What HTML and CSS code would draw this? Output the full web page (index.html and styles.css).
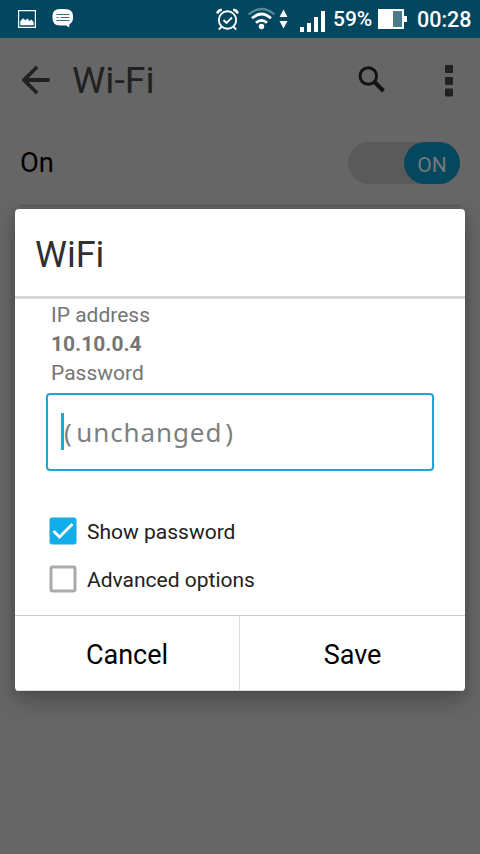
FILE: index.html
```html
<!DOCTYPE html>
<html lang="en">
<head>
<meta charset="utf-8">
<title>Wi-Fi</title>
<link rel="stylesheet" href="styles.css">
</head>
<body>
<header class="status">
  <svg class="status-left" width="60" height="38" viewBox="0 0 60 38">
    <path d="M.6 10.6h16.8v16.8H.6z" fill="none" stroke="#fff" stroke-width="1.2"/>
    <path d="M2.3 25.3v-4l2.700-3 2.500 2 1.900-1.700 2.300 2.500 2-1.500 2 3v2.700z" fill="#fff"/>
    <path d="M42 9h5q8 0 8 7v2q0 4-3.500 6.300l-.3 3.200-3-2H42q-7.500 0-7.500-7.500V16q0-7 7.500-7z" fill="#fff"/>
    <path d="M38.500 14.500h13M38.500 17.500h2M42.500 17.500h9M38.500 20.500h13" stroke="#04475f" stroke-width=".8"/>
  </svg>
  <svg class="status-right" width="112" height="38" viewBox="216 0 112 38">
    <g fill="none" stroke="#fff" stroke-width="1.900">
      <circle cx="227.500" cy="20" r="8.700"/>
      <path d="M223.500 20l3 3 5.500-5.500M221.800 26.500l-3 3M233.200 26.500l3 3"/>
      <path d="M217.300 13.500q1-3.500 4.500-3.800M237.700 13.500q-1-3.500-4.500-3.800" stroke-width="2.600"/>
      <path d="M248.500 14.500q13-11 26 0" stroke="#568797" stroke-width="2.200"/>
      <path d="M252 18.300q9.500-8.500 19 0" stroke-width="2.800"/>
      <path d="M256 22.800q5.500-5 11 0" stroke-width="2.700"/>
    </g>
    <circle cx="261.500" cy="26.500" r="2.700" fill="#fff"/>
    <path d="M279.500 17l4-7.500 4 7.500zM279.500 21h8l-4 7.500z" fill="#fff"/>
    <path d="M300 27h4v5h-4zM307 23h4v9h-4zM314 17h4v15h-4zM321 11h4v21h-4z" fill="#fff"/>
  </svg>
  <span class="percent">59%</span>
  <svg class="battery" width="30" height="38" viewBox="378 0 30 38">
    <path d="M378 9h26v7h3v6h-3v7h-26z" fill="#fff"/>
    <path d="M393 11h9v16h-9z" fill="#487b8c"/>
  </svg>
  <span class="clock">00:28</span>
</header>
<main class="page">
  <div class="toolbar">
    <svg class="back" width="30" height="30" viewBox="21 65 30 30"><path d="M48 80H24M36 68L24 80 36 92" fill="none" stroke="#212121" stroke-width="3.800" stroke-linecap="round" stroke-linejoin="round"/></svg>
    <h1>Wi-Fi</h1>
    <svg class="tools" width="100" height="40" viewBox="356 60 100 40">
      <circle cx="368.300" cy="76" r="8.300" fill="none" stroke="#131313" stroke-width="2.900"/>
      <path d="M374.500 82l9 9" stroke="#131313" stroke-width="4"/>
      <g fill="#212121"><rect x="445" y="65" width="8" height="8" rx="1"/><rect x="445" y="77" width="8" height="8" rx="1"/><rect x="445" y="88.500" width="8" height="8" rx="1"/></g>
    </svg>
  </div>
  <div class="wifi-row"><span>On</span><div class="switch"><b>ON</b></div></div>
</main>
<section class="dialog">
  <h2>WiFi</h2>
  <div class="form">
    <div class="label">IP address</div>
    <div class="label value">10.10.0.4</div>
    <div class="label">Password</div>
    <div class="field"><i></i><span>(<span class="hint">unchanged</span>)</span></div>
    <div class="option"><svg width="28" height="28" viewBox="0 0 28 28"><rect x=".5" y=".5" width="27" height="27" rx="2.500" fill="#12aeea"/><path d="M4.500 14l6 6L23.500 7" fill="none" stroke="#fff" stroke-width="2.800"/></svg><span>Show password</span></div>
    <div class="option"><svg width="28" height="28" viewBox="0 0 28 28"><rect x="2" y="2" width="24" height="24" rx="1.500" fill="#fff" stroke="#aaa" stroke-width="3"/></svg><span>Advanced options</span></div>
  </div>
  <div class="actions"><div class="cancel">Cancel</div><div class="save">Save</div></div>
</section>
</body>
</html>
```
FILE: styles.css
```css
* { box-sizing: border-box; }
body {
  margin: 0;
  width: 480px;
  height: 854px;
  overflow: hidden;
  position: relative;
  background: #666;
  font-family: Roboto, sans-serif;
}
svg { display: block; flex: none; }
.status {
  height: 38px;
  background: #02475f;
  color: #fff;
  display: flex;
  align-items: center;
  padding-left: 18px;
  white-space: nowrap;
  font-weight: 500;
  line-height: 38px;
}
.status-right { margin-left: 138px; }
.percent { width: 45px; margin-left: 5px; font-size: 21px; }
.clock { margin-left: 9px; font-size: 21.5px; line-height: 39px; }
.toolbar { height: 84px; display: flex; align-items: center; padding-left: 21px; }
h1 {
  margin: 0 0 0 21px;
  width: 284px;
  font-size: 37.5px;
  line-height: 84px;
  font-weight: 400;
  color: #212121;
}
.wifi-row {
  height: 84px;
  margin: 0 20px;
  padding-bottom: 1px;
  display: flex;
  justify-content: space-between;
  align-items: center;
  border-bottom: 1px solid #555;
  font-size: 27.3px;
}
.switch {
  width: 112px;
  height: 42px;
  border-radius: 21px;
  background: #5a5a5a;
  display: flex;
  justify-content: flex-end;
}
.switch b {
  width: 56px;
  border-radius: 21px;
  background: #04475f;
  color: #777;
  font-size: 21px;
  font-weight: 400;
  line-height: 46px;
  text-align: center;
}
.dialog {
  position: absolute;
  left: 15px;
  top: 209px;
  width: 450px;
  height: 482px;
  border-radius: 4px;
  background: #fff;
  box-shadow: 0 9px 22px rgba(0, 0, 0, .28), 0 0 7px rgba(0, 0, 0, .1);
  overflow: hidden;
}
h2 {
  margin: 0;
  height: 90px;
  padding-left: 20px;
  border-bottom: 3px solid #d8d8d8;
  font-size: 36px;
  line-height: 92px;
  font-weight: 400;
  color: #303030;
}
.form { height: 316px; padding: 1px 31px 0; }
.label { height: 29px; padding-left: 5px; font-size: 21px; line-height: 30px; color: #757575; }
.value { font-weight: 700; }
.field {
  height: 78px;
  margin: 6px 0 46px;
  padding-left: 13px;
  border: 2px solid #20a5d5;
  border-radius: 4px;
  display: flex;
  align-items: center;
  color: #7f7f7f;
  font: 26px "Noto Sans", sans-serif;
  letter-spacing: .9px;
}
.field i { width: 3px; height: 37px; margin-bottom: 2px; background: #20a5d5; }
.hint { margin: 0 3px 0 3.5px; }
.option { height: 28px; margin: 0 0 20px 3px; display: flex; align-items: center; font-size: 21px; line-height: 28px; color: #212121; }
.option span { margin-left: 10px; padding-top: 2px; }
.actions { height: 76px; border-top: 1px solid #ccc; border-bottom: 1px solid #ddd; display: flex; text-align: center; font-size: 27px; line-height: 78px; }
.cancel { width: 225px; border-right: 1px solid #ddd; }
.save { flex: 1; }
```
